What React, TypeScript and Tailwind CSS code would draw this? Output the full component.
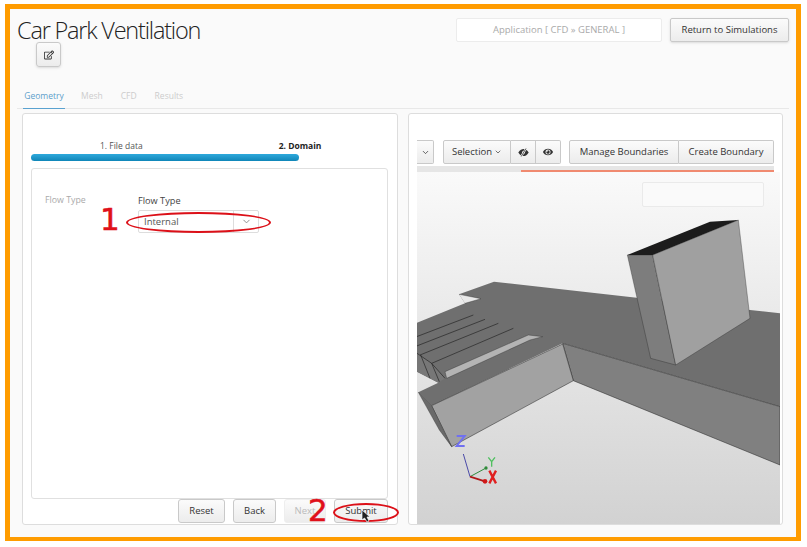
import { FaRegEdit, FaEye } from "react-icons/fa";
import { ChevronDown } from "lucide-react";

const Btn = ({ children, cls = "" }: { children: React.ReactNode; cls?: string }) => (
  <div className={"flex items-center justify-center border border-[#c9c9c9] bg-gradient-to-b from-[#fbfbfb] to-[#ececec] text-[9.5px] text-[#333] " + cls}>{children}</div>
);

function EyeSlash() {
  return (
    <svg width="11" height="9" viewBox="0 0 11 9">
      <path d="M0.3 4.5 C2 1.5 4 1 5.5 1 C7 1 9 1.5 10.7 4.5 C9 7.5 7 8 5.5 8 C4 8 2 7.5 0.3 4.5 Z" fill="#333" />
      <circle cx="5.5" cy="4.5" r="1.4" fill="#eee" />
      <path d="M8.2 0.3 L3 8.7" stroke="#f4f4f4" strokeWidth="2" />
      <path d="M8 0.5 L3.2 8.5" stroke="#333" strokeWidth="0.8" />
    </svg>
  );
}

function Model() {
  return (
    <svg className="absolute inset-0 w-full h-full" viewBox="21 -174 1089 1056">
      <polygon fill="#6f6f6f" points="21,278 165,220 147,193 252,155 680,203 1020,240 1110,250 1110,530 458,340 65,527 25,487 85,458 21,425" />
      <path d="M147 193 L213 206 L165 220" fill="#e9e9e9" stroke="#222" strokeWidth="1" />
      <polygon fill="#808080" stroke="#222" strokeWidth="1.5" points="458,340 1110,530 1110,705 490,452" />
      <polygon fill="#a2a2a2" stroke="#222" strokeWidth="1.5" points="65,527 458,342 490,452 125,650" />
      <polygon fill="#6a6a6a" stroke="#222" strokeWidth="1" points="25,487 65,527 125,650 88,600" />
      <polygon fill="#777" points="21,370 65,400 105,445 85,458 21,425" />
      <polygon fill="#b4b4b4" stroke="#222" strokeWidth="1" points="105,425 355,315 398,320 360,330 110,445" />
      <path d="M20 320 L190 255 M20 348 L225 268 M30 375 L265 280 M65 400 L310 295 M21 370 L65 400 L105 445 M32 375 L60 445 M65 400 L88 455" fill="none" stroke="#222" strokeWidth="2" />
      <polygon fill="#7d7d7d" stroke="#222" strokeWidth="1" points="652,75 728,75 797,405 722,385" />
      <polygon fill="#a0a0a0" stroke="#222" strokeWidth="1" points="728,75 985,-30 1020,265 797,405" />
      <polygon fill="#1c1c1c" points="652,75 900,-25 985,-30 728,75" />
      <path d="M180 740 L160 672" stroke="#4a4aa8" strokeWidth="3" fill="none" />
      <path d="M180 740 L228 714" stroke="#2f8a3a" strokeWidth="3" fill="none" />
      <path d="M180 740 L225 754" stroke="#b01818" strokeWidth="5" fill="none" />
      <circle cx="225" cy="754" r="7" fill="#d01818" />
      <circle cx="228" cy="714" r="5" fill="#2f8a3a" />
      <path d="M140 618 H164 L140 648 H164" stroke="#7070f0" strokeWidth="6" fill="none" />
      <path d="M235 682 L245 695 L255 682 M245 695 V710" stroke="#50c060" strokeWidth="4" fill="none" />
      <path d="M238 722 L258 760 M258 722 L238 760" stroke="#e02020" strokeWidth="7" fill="none" />
    </svg>
  );
}

export default function App() {
  return (
    <div className="w-[807px] h-[547px] bg-white pt-1 pl-[5px] font-['Open_Sans',sans-serif] overflow-hidden">
      <div className="relative w-[796px] h-[537px] border-[5px] border-b-4 border-[#ff9c00] bg-[#fafafa] flex flex-col px-[7px]">
        <div className="flex justify-between items-start h-[100px] border-b border-[#e8e8e8] relative shrink-0">
          <div>
            <div className="text-[23.5px] font-light leading-[32px] text-[#222] pt-[5px] h-[33px] tracking-[-1.2px] whitespace-nowrap">Car Park Ventilation</div>
            <Btn cls="ml-[19px] w-[25px] h-[25px] rounded-[3px] shadow-sm"><FaRegEdit className="text-[10px]" /></Btn>
          </div>
          <div className="flex items-center gap-2 mt-[9px]">
            <div className="w-[206px] h-[24px] border border-[#ececec] bg-white rounded-[2px] flex items-center justify-center text-[9.5px] text-[#aaa]">Application [ CFD » GENERAL ]</div>
            <Btn cls="w-[119px] h-[24px] rounded-[2px] shadow-sm">Return to Simulations</Btn>
          </div>
          <div className="absolute left-[6px] bottom-[-1px] flex text-[8.5px] text-[#ccc]">
            <div className="w-[42px] h-[25px] flex items-center justify-center border-b border-[#5aa2d0] text-[#5d9fcb]">Geometry</div>
            <div className="ml-[16px] h-[25px] flex items-center">Mesh</div>
            <div className="ml-[18px] h-[25px] flex items-center">CFD</div>
            <div className="ml-[18px] h-[25px] flex items-center">Results</div>
          </div>
        </div>
        <div className="flex mt-[4px] ml-[5px] gap-[10px]">
          <div className="relative w-[376px] h-[412px] bg-white border border-[#ddd] rounded-[3px] px-[8px]">
            <div className="flex text-[8.5px] text-[#555] mt-[25px] h-[14px] items-center">
              <span className="ml-[69px]">1. File data</span>
              <span className="ml-[136px] font-bold text-[#222]">2. Domain</span>
            </div>
            <div className="w-[268px] h-[7px] mt-[1px] rounded-full bg-gradient-to-b from-[#2ea9dc] to-[#0f86b8]" />
            <div className="w-[357px] h-[331px] mt-[7px] border border-[#e0e0e0] rounded-[3px] flex pt-[25px] pl-[13px] text-[9.5px]">
              <span className="text-[#aaa] w-[93px] text-[8.8px]">Flow Type</span>
              <div>
                <div className="text-[#444] text-[9.2px] leading-[13px]">Flow Type</div>
                <div className="mt-[3px] w-[121px] h-[23px] border border-[#ddd] rounded-[2px] flex items-center">
                  <span className="flex-1 pl-[5px] pt-[2px] text-[#555]">Internal</span>
                  <span className="w-[25px] h-full border-l border-[#ddd] flex items-center justify-center"><ChevronDown size={11} className="text-[#888]" /></span>
                </div>
              </div>
            </div>
            <div className="absolute right-[9px] top-[385px] flex gap-[8px]">
              <Btn cls="w-[47px] h-[24px] rounded-[3px]">Reset</Btn>
              <Btn cls="w-[43px] h-[24px] rounded-[3px]">Back</Btn>
              <Btn cls="w-[42px] h-[24px] rounded-[3px] !text-[#bbb] border-[#eee]">Next</Btn>
              <Btn cls="w-[54px] h-[24px] rounded-[3px]">Submit</Btn>
            </div>
          </div>
          <div className="w-[375px] h-[412px] bg-white border border-[#ddd] rounded-[3px] pl-[8px] flex flex-col">
            <div className="flex mt-[26px] h-[24px] text-[9.5px]">
              <Btn cls="w-[17px] rounded-r-[2px] border-l-0"><ChevronDown size={9} /></Btn>
              <Btn cls="ml-[9px] w-[68px] rounded-l-[2px] gap-[2px]">Selection <ChevronDown size={8} /></Btn>
              <Btn cls="w-[25px] border-l-0"><EyeSlash /></Btn>
              <Btn cls="w-[25px] border-l-0 rounded-r-[2px]"><FaEye className="text-[10px]" /></Btn>
              <Btn cls="ml-[8px] w-[110px] rounded-l-[2px]">Manage Boundaries</Btn>
              <Btn cls="w-[95px] border-l-0 rounded-r-[2px]">Create Boundary</Btn>
            </div>
            <div className="mt-[2px] h-[6px] w-[357px] bg-[#e6e6e6] flex items-end justify-end"><div className="w-[253px] h-[2px] bg-[#f08a70]" /></div>
            <div className="relative w-[363px] flex-1 bg-gradient-to-b from-[#fafafa] to-[#d2d2d2] overflow-hidden">
              <Model />
              <div className="absolute left-[225px] top-[10px] w-[122px] h-[25px] bg-[#fafafa] border border-[#eaeaea] rounded-[2px]" />
            </div>
          </div>
        </div>

        <div className="absolute left-[116px] top-[203px] w-[145px] h-[21px] rounded-[50%] border-2 border-[#dc1018]" />
        <div className="absolute left-[90px] top-[194px] text-[31px] leading-[32px] text-[#e0101a] [-webkit-text-stroke:0.6px_#e0101a] font-['DejaVu_Sans',sans-serif]">1</div>
        <div className="absolute left-[323px] top-[494px] w-[66px] h-[19px] rounded-[50%] border-2 border-[#dc1018]" />
        <div className="absolute left-[298px] top-[485px] text-[31px] leading-[32px] text-[#e0101a] [-webkit-text-stroke:0.6px_#e0101a] font-['DejaVu_Sans',sans-serif]">2</div>
        <svg className="absolute left-[351px] top-[500px]" width="11" height="16" viewBox="0 0 11 16"><path d="M1 1 L1 11 L3.5 9 L6 13 L8 12 L6 8 L9 8 Z" fill="#222" stroke="#fff" strokeWidth="0.7" /></svg>
      </div>
    </div>
  );
}
